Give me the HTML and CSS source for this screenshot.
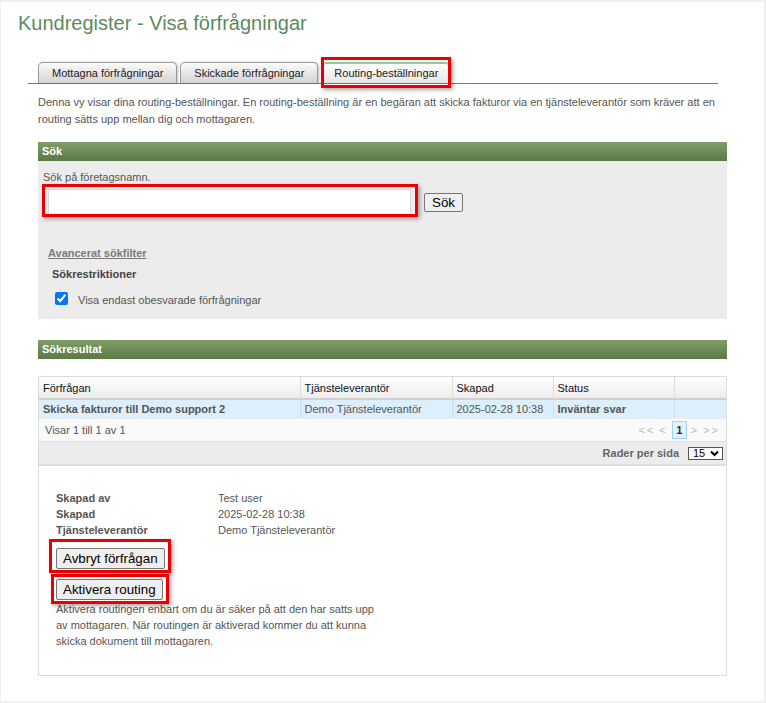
FILE: index.html
```html
<!DOCTYPE html>
<html lang="sv">
<head>
    <meta charset="UTF-8">
    <title>Kundregister - Visa förfrågningar</title>
    <link rel="stylesheet" href="styles.css">
</head>
<body>
<div class="page">
    <h1 class="title">Kundregister - Visa förfrågningar</h1>

    <div class="tabs">
        <a href="#" class="tab">Mottagna förfrågningar</a>
        <a href="#" class="tab">Skickade förfrågningar</a>
        <a href="#" class="tab active mark mark-tab">Routing-beställningar</a>
    </div>

    <div class="content">
        <p class="intro">Denna vy visar dina routing-beställningar. En routing-beställning är en begäran att skicka fakturor via en tjänsteleverantör som kräver att en routing sätts upp mellan dig och mottagaren.</p>

        <div class="box">
            <div class="box-head">Sök</div>
            <div class="box-body search">
                <div class="search-label">Sök på företagsnamn.</div>
                <div class="search-row">
                    <span class="mark mark-input"><input type="text" class="search-input"></span>
                    <button class="btn btn-search">Sök</button>
                </div>
                <a href="#" class="adv-link">Avancerat sökfilter</a>
                <div class="restrict-title">Sökrestriktioner</div>
                <label class="check-row">
                    <input type="checkbox" checked>
                    <span>Visa endast obesvarade förfrågningar</span>
                </label>
            </div>
        </div>

        <div class="box results">
            <div class="box-head">Sökresultat</div>
            <div class="grid">
                <table>
                    <colgroup>
                        <col style="width:261px">
                        <col style="width:152px">
                        <col style="width:101px">
                        <col style="width:121px">
                        <col>
                    </colgroup>
                    <thead>
                        <tr>
                            <th>Förfrågan</th>
                            <th>Tjänsteleverantör</th>
                            <th>Skapad</th>
                            <th>Status</th>
                            <th></th>
                        </tr>
                    </thead>
                    <tbody>
                        <tr class="selected">
                            <td class="strong">Skicka fakturor till Demo support 2</td>
                            <td>Demo Tjänsteleverantör</td>
                            <td>2025-02-28 10:38</td>
                            <td class="strong">Inväntar svar</td>
                            <td></td>
                        </tr>
                    </tbody>
                </table>
                <div class="pager">
                    <span>Visar 1 till 1 av 1</span>
                    <div class="pages">
                        <span class="off">&lt;&lt;</span>
                        <span class="off">&lt;</span>
                        <span class="current">1</span>
                        <span class="off">&gt;</span>
                        <span class="off">&gt;&gt;</span>
                    </div>
                </div>
                <div class="rows-bar">
                    <span>Rader per sida</span>
                    <span class="select">15
                        <svg width="9" height="7" viewBox="0 0 9 7"><path d="M1 1.5 L4.5 5 L8 1.5" fill="none" stroke="#000" stroke-width="2"/></svg>
                    </span>
                </div>

                <div class="details">
                    <div class="facts">
                        <span class="key">Skapad av</span><span>Test user</span>
                        <span class="key">Skapad</span><span>2025-02-28 10:38</span>
                        <span class="key">Tjänsteleverantör</span><span>Demo Tjänsteleverantör</span>
                    </div>
                    <div class="action">
                        <span class="mark mark-cancel"><button class="btn">Avbryt förfrågan</button></span>
                    </div>
                    <div class="action">
                        <span class="mark mark-activate"><button class="btn">Aktivera routing</button></span>
                    </div>
                    <p class="note">Aktivera routingen enbart om du är säker på att den har satts upp av mottagaren. När routingen är aktiverad kommer du att kunna skicka dokument till mottagaren.</p>
                </div>
            </div>
        </div>
    </div>
</div>
</body>
</html>
```

FILE: styles.css
```css
* {
    box-sizing: border-box;
}
body {
    margin: 0;
    background: #f0f0f0;
    font: 11px "Liberation Sans", Arial, sans-serif;
    color: #555;
}
.page {
    margin: 2px 2px 0 1px;
    height: 699px;
    background: #fff;
    padding-top: 9px;
}
.title {
    margin: 0 0 0 17px;
    font-size: 20px;
    font-weight: normal;
    line-height: 25px;
    color: #5b8c5b;
}

/* tabs */
.tabs {
    display: flex;
    align-items: flex-end;
    gap: 3px;
    margin: 26px 0 0 27px;
    width: 690px;
    padding-left: 10px;
    border-bottom: 1px solid #5e8a5e;
}
.tab {
    height: 21px;
    line-height: 21px;
    padding: 0 13px;
    font-size: 11px;
    color: #222;
    text-decoration: none;
    border: 1px solid #9a9a9a;
    border-bottom: none;
    border-radius: 5px 5px 0 0;
    background: linear-gradient(#fbfbfb, #d3d3d3);
    box-shadow: 1px 0 2px rgba(0,0,0,0.25);
}
.tab.active {
    margin-left: 1px;
    padding: 0 11px;
    border-top: 2px solid #93c993;
    line-height: 19px;
    background: linear-gradient(#ffffff, #e6e6e6);
}

/* red annotation frames */
.mark {
    position: relative;
    display: inline-block;
}
.mark::after {
    content: '';
    position: absolute;
    border: 3px solid #ea0000;
    box-shadow: 2px 2px 4px rgba(0,0,0,0.35);
    pointer-events: none;
}
.mark-tab::after { top: -7px; bottom: -5px; left: -2px; right: -2px; }
.mark-input::after { top: -5px; bottom: -2px; left: -6px; right: -7px; }
.mark-cancel::after { top: -9px; bottom: -4px; left: -7px; right: -6px; }
.mark-activate::after { top: -5px; bottom: -4px; left: -5px; right: -6px; }

.content {
    margin-left: 37px;
    width: 689px;
}
.intro {
    margin: 10px 0 0;
    line-height: 17px;
}

/* boxes */
.box {
    margin-top: 14px;
}
.box.results {
    margin-top: 21px;
}
.box-head {
    height: 19px;
    line-height: 19px;
    padding-left: 4px;
    color: #fff;
    font-weight: bold;
    background: linear-gradient(#7f9e6a, #5a7945);
}
.box-body.search {
    height: 158px;
    background: #ececec;
    padding: 9px 0 0 5px;
    line-height: 15px;
}
.search-row {
    display: flex;
    align-items: center;
    margin: 4px 0 0 5px;
}
.search-input {
    display: block;
    width: 363px;
    height: 26px;
    border: 1px solid #d8d8d8;
    background: #fff;
}
.btn {
    font: 13.33px "Liberation Sans", Arial, sans-serif;
    color: #000;
    padding: 2px 6px;
    border: 1px solid #767676;
    border-radius: 2px;
    background: #efefef;
}
.btn-search {
    margin-left: 13px;
    padding: 1px 7px;
}
.adv-link {
    display: inline-block;
    margin: 31px 0 0 5px;
    font-weight: bold;
    color: #7a7a7a;
}
.restrict-title {
    margin: 6px 0 0 9px;
    font-weight: bold;
    color: #444;
}
.check-row {
    display: flex;
    align-items: center;
    margin: 7px 0 0 12px;
}
.check-row input {
    width: 13px;
    height: 13px;
    margin: 0 10px 0 0;
}
.check-row span {
    padding-top: 4px;
}

/* results grid */
.grid {
    margin-top: 17px;
    border: 1px solid #dcdcdc;
}
table {
    width: 100%;
    border-collapse: collapse;
    table-layout: fixed;
}
th {
    height: 22px;
    padding: 0 4px;
    text-align: left;
    font-weight: normal;
    color: #111;
    background: linear-gradient(#ffffff, #ececec);
    border-right: 1px solid #dcdcdc;
    border-bottom: 2px solid #cfcfcf;
}
td {
    height: 19px;
    padding: 0 4px;
    background: #ddeefc;
    border-right: 1px solid #d3e0ea;
    white-space: nowrap;
}
th:last-child, td:last-child {
    border-right: none;
}
td.strong {
    font-weight: bold;
}
.pager {
    display: flex;
    justify-content: space-between;
    align-items: center;
    height: 23px;
    padding: 0 6px 0 6px;
    background: #fafafa;
    border-top: 1px solid #ececec;
}
.pages {
    display: flex;
    align-items: center;
    gap: 4px;
}
.pages .off {
    color: #bbb;
    letter-spacing: 2px;
}
.pages .current {
    width: 15px;
    height: 18px;
    line-height: 16px;
    text-align: center;
    font-weight: bold;
    color: #1b2f55;
    background: #e3f2fd;
    border: 1px solid #9fd3ef;
}
.rows-bar {
    display: flex;
    justify-content: flex-end;
    align-items: center;
    height: 25px;
    padding-right: 3px;
    background: #ececec;
    border-top: 1px solid #e0e0e0;
    border-bottom: 2px solid #dcdcdc;
    font-weight: bold;
    color: #666;
}
.select {
    display: flex;
    justify-content: space-between;
    align-items: center;
    width: 35px;
    height: 13px;
    margin-left: 9px;
    padding: 0 3px 0 4px;
    border: 1px solid #555;
    background: #fff;
    font-size: 11px;
    font-weight: normal;
    color: #000;
}

/* details */
.details {
    padding: 24px 0 26px 17px;
}
.facts {
    display: grid;
    grid-template-columns: 162px auto;
    line-height: 16px;
}
.facts .key {
    font-weight: bold;
}
.action {
    margin-top: 10px;
}
.action .btn {
    height: 21px;
    padding: 1px 6px;
    display: block;
}
.note {
    margin: 1px 0 0;
    width: 325px;
    line-height: 16px;
}
```
